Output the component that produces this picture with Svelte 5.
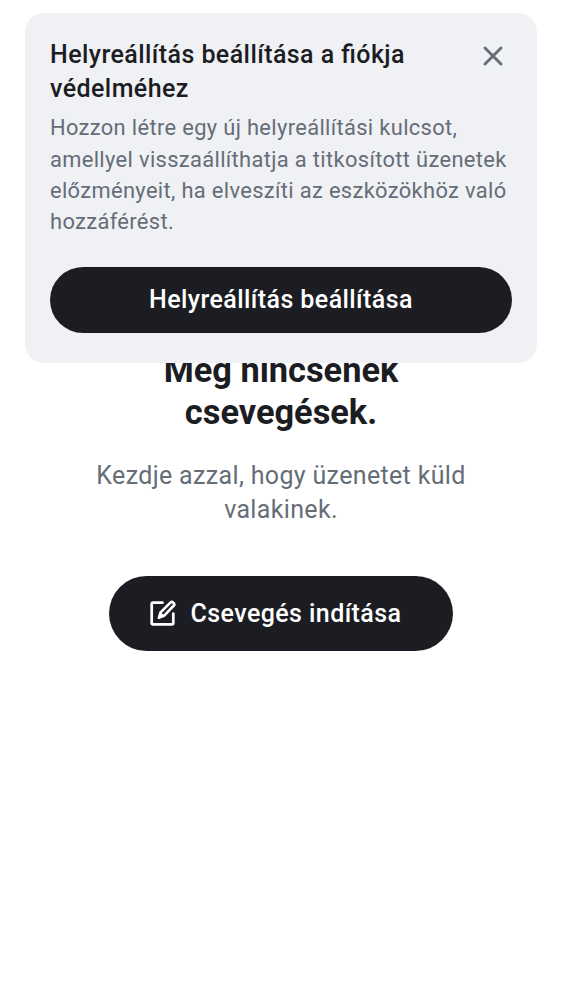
<script>
  let bannerVisible = $state(true);
</script>

<main>
  {#if bannerVisible}
    <section class="banner">
      <div class="heading">
        <h2>Helyreállítás beállítása a fiókja védelméhez</h2>
        <button class="close" aria-label="Bezárás" onclick={() => (bannerVisible = false)}>
          <svg width="20" height="20" viewBox="0 0 20 20"><path d="M2 2 18 18M18 2 2 18" /></svg>
        </button>
      </div>
      <p>Hozzon létre egy új helyreállítási kulcsot, amellyel visszaállíthatja a titkosított üzenetek előzményeit, ha elveszíti az eszközökhöz való hozzáférést.</p>
      <button class="pill setup">Helyreállítás beállítása</button>
    </section>
  {/if}
  <section class="empty">
    <h1>Még nincsenek csevegések.</h1>
    <p>Kezdje azzal, hogy üzenetet küld valakinek.</p>
    <button class="pill start">
      <svg width="26" height="26" viewBox="0 0 26 26">
        <path d="M12.5 2.7H3Q1.7 2.7 1.7 4V23Q1.7 24.3 3 24.3H22Q23.3 24.3 23.3 23V13.5" />
        <path d="M9 17.6 10.6 12.4 20.4 2.6Q21.8 1.2 23.2 2.6L23.6 3Q25 4.4 23.6 5.8L14.2 15.6Z" />
        <path class="tip" d="M8.2 18.4 10.2 12.4 14.2 16Z" />
      </svg>
      <span>Csevegés indítása</span>
    </button>
  </section>
</main>

<style>
  :global(body) { margin: 0; background: #fff; }
  main { height: 1000px; overflow: hidden; position: relative; font-family: Roboto, sans-serif; color: #1b1d22; }
  h1, h2, p { margin: 0; }
  button { border: 0; padding: 0; font-family: inherit; cursor: pointer; }
  svg { display: block; fill: none; stroke: currentColor; flex: none; }
  .banner { position: absolute; z-index: 1; top: 12.5px; left: 25px; width: 512px; height: 350px; box-sizing: border-box; padding: 25px; border-radius: 19px; background: #f0f1f5; }
  .heading { display: flex; justify-content: space-between; }
  h2 { width: 400px; font-size: 25px; line-height: 34.4px; font-weight: 500; letter-spacing: 0.43px; font-feature-settings: "liga" 1; }
  .close { width: 20px; height: 20px; margin: 8.5px 9px 0 0; background: none; color: #656d77; stroke-width: 2.9; stroke-linecap: round; }
  .banner p { width: 466px; margin-top: 6px; font-size: 21.875px; line-height: 31.25px; letter-spacing: 0.35px; color: #656d77; }
  .pill { display: flex; align-items: center; justify-content: center; background: #1b1d22; color: #fff; font-size: 25px; line-height: 34px; font-weight: 500; letter-spacing: 0.42px; border-radius: 40px; }
  .setup { width: 462px; height: 66px; margin-top: 29.5px; }
  .empty { padding-top: 349px; display: flex; flex-direction: column; align-items: center; text-align: center; }
  h1 { width: 300px; font-size: 34.375px; line-height: 42px; font-weight: 700; }
  .empty p { width: 400px; margin-top: 26px; font-size: 25px; line-height: 34.4px; letter-spacing: 0.34px; color: #656d77; }
  .start { width: 344px; height: 75px; margin-top: 48.6px; gap: 15px; padding-right: 11px; }
  .start svg { margin-top: -1px; stroke-width: 2.7; stroke-linejoin: round; stroke-linecap: round; }
  .tip { fill: currentColor; stroke-width: 1; }
</style>
